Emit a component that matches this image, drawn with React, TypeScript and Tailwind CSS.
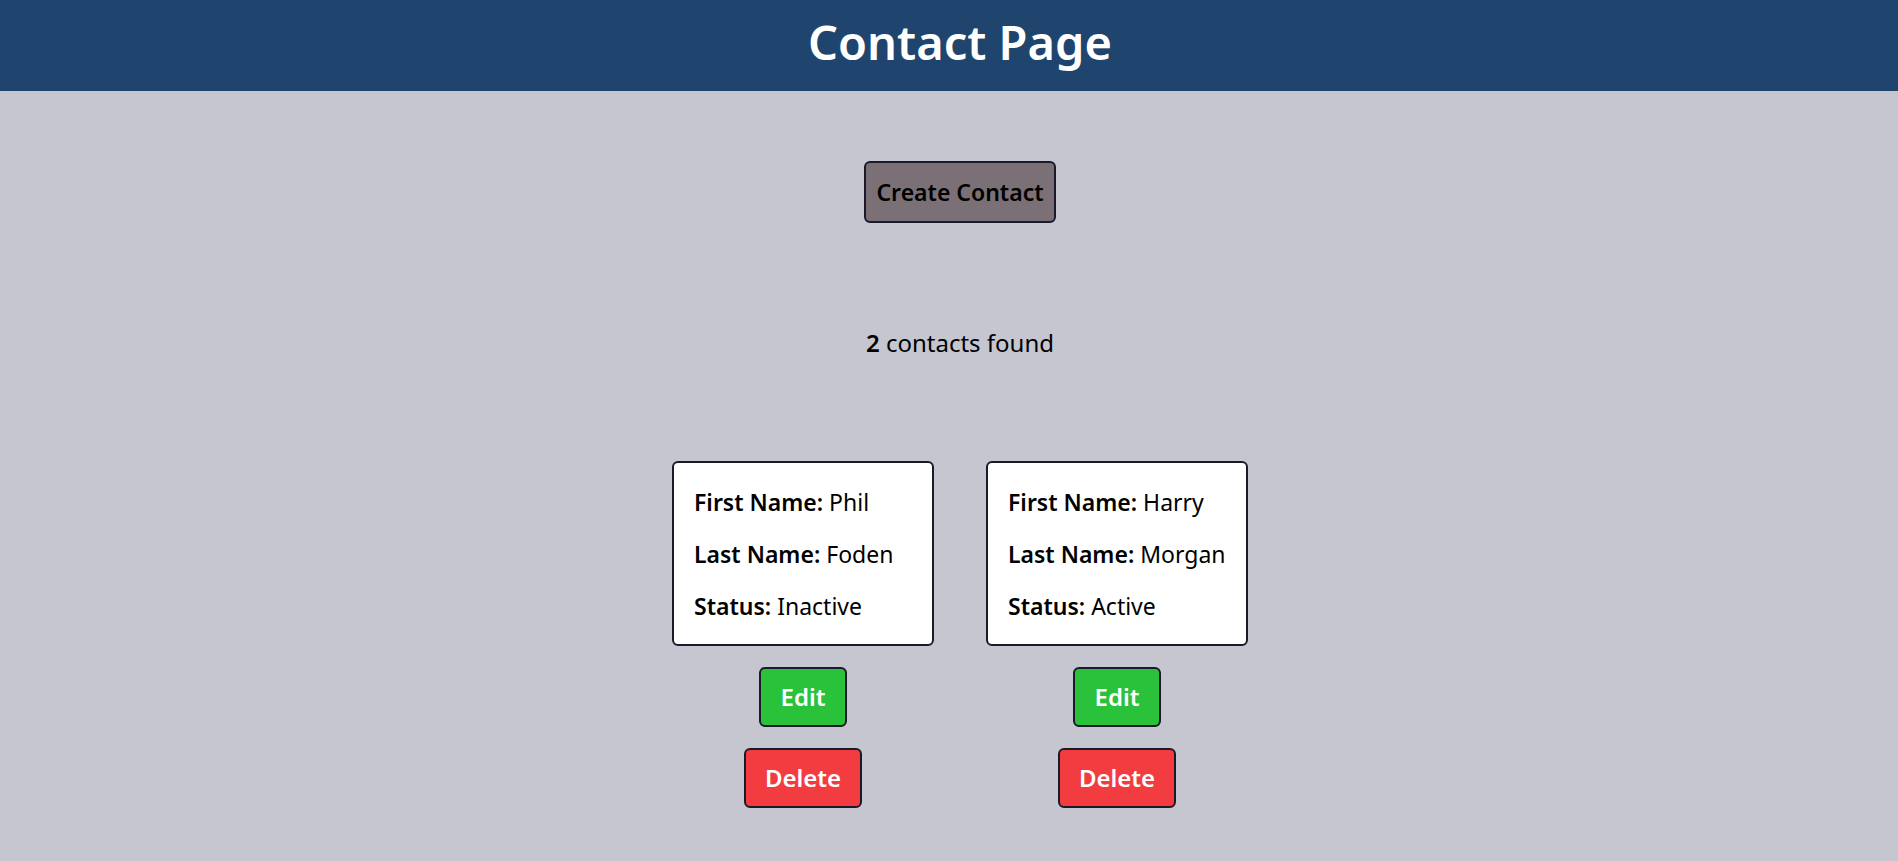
import React from "react";

const contacts = [
  { first: "Phil", last: "Foden", status: "Inactive" },
  { first: "Harry", last: "Morgan", status: "Active" },
];

export default function App() {
  return (
    <div
      className="min-h-screen bg-[#c6c6d1] text-black"
      style={{ fontFamily: '"Noto Sans", "Open Sans", sans-serif' }}
    >
      <header className="h-[91px] bg-[#1f456e] flex items-center justify-center pl-[22px] pb-[6px]">
        <h1 className="text-[47px] font-semibold text-white leading-none">Contact Page</h1>
      </header>
      <main className="flex flex-col items-center pt-[70px] pl-[22px]">
        <button className="bg-[#7a7075] border-2 border-[#1a1a2a] rounded-[6px] px-[10px] py-[13px] text-[23px] leading-[32px] font-semibold text-black whitespace-nowrap">
          Create Contact
        </button>
        <p className="mt-[104px] text-[24px] leading-[32px]">
          <span className="font-semibold">2</span> contacts found
        </p>
        <div className="mt-[102px] flex gap-[52px]">
          {contacts.map((c) => (
            <div key={c.first} className="flex flex-col items-center gap-[21px]">
              <div className="w-[262px] bg-white border-2 border-[#1a1a2a] rounded-[6px] px-[20px] pt-[23px] pb-[22px] flex flex-col gap-[20px] text-[23px] leading-[32px] whitespace-nowrap">
                <p>
                  <span className="font-semibold">First Name:</span> {c.first}
                </p>
                <p>
                  <span className="font-semibold">Last Name:</span> {c.last}
                </p>
                <p>
                  <span className="font-semibold">Status:</span> {c.status}
                </p>
              </div>
              <button className="bg-[#2ac23a] border-2 border-[#1a1a2a] rounded-[6px] px-[20px] py-[12px] text-[24px] leading-[32px] font-semibold text-white">
                Edit
              </button>
              <button className="bg-[#f23c40] border-2 border-[#1a1a2a] rounded-[6px] px-[19px] py-[12px] text-[24px] leading-[32px] font-semibold text-white">
                Delete
              </button>
            </div>
          ))}
        </div>
      </main>
    </div>
  );
}
